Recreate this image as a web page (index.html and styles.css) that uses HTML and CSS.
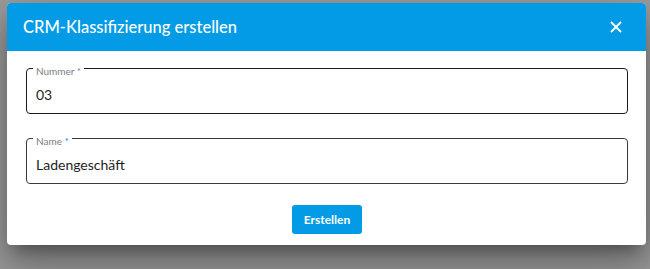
FILE: index.html
```html
<!DOCTYPE html>
<html lang="de">
<head>
<meta charset="utf-8">
<title>CRM-Klassifizierung erstellen</title>
<link rel="stylesheet" href="styles.css">
</head>
<body>
<div class="dialog">
  <header class="dialog-header">
    <h1 class="dialog-title">CRM-Klassifizierung erstellen</h1>
    <button class="close-btn" type="button" aria-label="Schließen">
      <svg width="12" height="12" viewBox="0 0 12 12"><path d="M1 1 L11 11 M11 1 L1 11" stroke="#fff" stroke-width="1.8" fill="none"/></svg>
    </button>
  </header>
  <div class="dialog-body">
    <fieldset class="field field-dark">
      <legend class="field-label">Nummer *</legend>
      <input class="field-input" type="text" value="03">
    </fieldset>
    <fieldset class="field field-slate">
      <legend class="field-label">Name <span class="req">*</span></legend>
      <input class="field-input" type="text" value="Ladengeschäft">
    </fieldset>
    <div class="actions">
      <button class="primary-btn" type="button">Erstellen</button>
    </div>
  </div>
</div>
</body>
</html>
```
FILE: styles.css
```css
html, body {
  margin: 0;
  height: 100%;
  overflow: hidden;
}
body {
  background: #9d9d9d;
  font-family: Lato, "Noto Sans", sans-serif;
}
.dialog {
  margin: 3px 0 0 7px;
  width: 639px;
  background: #fff;
  border-radius: 4px;
  overflow: hidden;
  box-shadow: 0 11px 15px -7px rgba(0,0,0,.35), 0 24px 38px 3px rgba(0,0,0,.2), 0 9px 46px 8px rgba(0,0,0,.14);
}
.dialog-header {
  height: 48px;
  background: #039be5;
  display: flex;
  align-items: center;
  justify-content: space-between;
  padding: 0 24px 0 16px;
}
.dialog-title {
  margin: 0;
  font-size: 16.5px;
  font-weight: 500;
  color: #fff;
}
.close-btn {
  background: none;
  border: 0;
  padding: 0;
  width: 12px;
  height: 12px;
  display: flex;
  cursor: pointer;
}
.dialog-body {
  padding: 9px 18px 11px 19px;
}
.field {
  margin: 0;
  padding: 0 9px 8px;
  border: 1px solid #1c1c1c;
  border-radius: 4px;
  min-width: 0;
}
.field-slate {
  border-color: #343b47;
  margin-top: 16px;
}
.field-label {
  margin-left: -3px;
  padding: 6px 3px 0;
  font-size: 10px;
  line-height: 10px;
  color: #7d7d7d;
}
.req {
  color: #039be5;
}
.field-input {
  display: block;
  width: 100%;
  box-sizing: border-box;
  margin-top: 9px;
  height: 20px;
  border: 0;
  padding: 0;
  outline: none;
  font-family: inherit;
  font-size: 14px;
  line-height: 20px;
  color: #1e1e1e;
  background: transparent;
}
.actions {
  display: flex;
  justify-content: center;
  margin-top: 21px;
}
.primary-btn {
  width: 70px;
  height: 29px;
  border: 0;
  border-radius: 3px;
  background: #039be5;
  color: #fff;
  font-family: inherit;
  font-size: 12px;
  font-weight: 700;
  padding: 0;
  cursor: pointer;
}
```
